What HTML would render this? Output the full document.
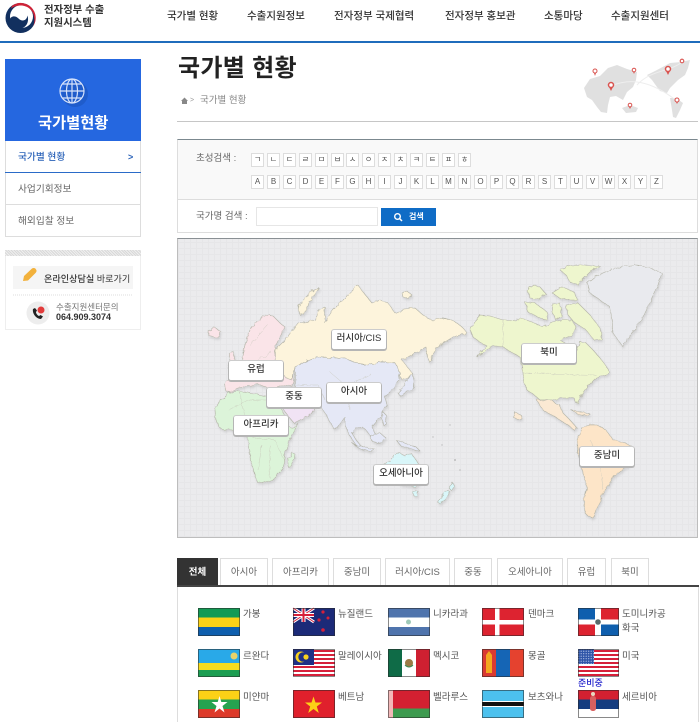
<!DOCTYPE html>
<html lang="ko"><head><meta charset="utf-8"><title>국가별 현황</title>
<style>
*{box-sizing:border-box}
html,body{margin:0;padding:0;background:#fff}
body{width:700px;height:722px;overflow:hidden;position:relative;font-family:"Liberation Sans","Noto Sans CJK KR",sans-serif;color:#444;filter:blur(.3px)}
.t{position:absolute;white-space:nowrap;line-height:1;font-size:10px}
.b{position:absolute}
.nav{font-size:10.5px;color:#333;top:11px;font-weight:500}
.ck{position:absolute;width:13px;height:14px;border:1px solid #ddd;background:#fff;font-size:8px;line-height:12px;text-align:center;color:#555}
.lb{position:absolute;width:54px;height:19px;background:#fff;border-radius:2px;box-shadow:0 1px 0 1px #b5b5b5,0 0 0 1px #ccc;text-align:center;font-size:9.5px;line-height:18px;color:#333;font-weight:500}
.tab{position:absolute;top:558px;height:27px;border:1px solid #ddd;border-bottom:0;background:#fff;text-align:center;font-size:9.5px;line-height:27px;color:#666}
.c{position:absolute;font-size:9.5px;color:#555;line-height:14px}
.f{position:absolute;width:42px;height:28px;border:1px solid rgba(40,40,40,.55)}
svg{position:absolute;left:0;top:0}
</style></head><body>

<!-- header -->
<div class="b" style="left:0;top:41px;width:700px;height:2px;background:#1f6cbc"></div>
<svg width="40" height="40" viewBox="0 0 40 40">
<circle cx="20.500" cy="18" r="15" fill="#12305f"/>
<circle cx="21.500" cy="16.500" r="11.500" fill="#fff"/>
<path d="M12 5.700A15 15 0 0 1 33 26.500A13.500 13.500 0 0 0 34 17C33.500 10 27 5.500 21 5.500C17 5.500 14 6.500 11 8.500Z" fill="#cf2337"/>
<path d="M9.500 20C11 15.500 15.500 15.500 18.500 18.500C21.500 21.500 26.500 21.500 27.500 15.500C29.500 22 26 28.500 19.500 28.500C14 28.500 10.500 25 9.500 20Z" fill="#12305f"/>
</svg>
<div class="t" style="left:44px;top:4px;font-size:10.400px;color:#333;font-weight:700;line-height:13px">전자정부 수출<br>지원시스템</div>
<div class="t nav" style="left:167px">국가별 현황</div>
<div class="t nav" style="left:247px">수출지원정보</div>
<div class="t nav" style="left:334px">전자정부 국제협력</div>
<div class="t nav" style="left:445px">전자정부 홍보관</div>
<div class="t nav" style="left:544px">소통마당</div>
<div class="t nav" style="left:611px">수출지원센터</div>

<!-- sidebar -->
<div class="b" style="left:5px;top:59px;width:136px;height:82px;background:#2567e0"></div>
<svg width="146" height="145" viewBox="0 0 146 145">
<circle cx="75" cy="94" r="13" fill="#1d55bd" opacity=".6"/>
<g fill="none" stroke="#d6e2fa" stroke-width="1.200"><circle cx="72" cy="91" r="12"/><ellipse cx="72" cy="91" rx="5.500" ry="12"/><path d="M60 91H84M62 84H82M62 98H82M72 79V103"/></g>
</svg>
<div class="t" style="left:38px;top:116px;font-size:15.300px;color:#fff;font-weight:700">국가별현황</div>
<div class="b" style="left:5px;top:141px;width:136px;height:96px;border:1px solid #ddd;border-top:0"></div>
<div class="b" style="left:5px;top:172px;width:136px;height:1px;background:#2a6bc8"></div>
<div class="b" style="left:5px;top:204px;width:136px;height:1px;background:#ddd"></div>
<div class="t" style="left:18px;top:153px;font-size:9.700px;color:#2a62b8;font-weight:500">국가별 현황</div>
<div class="t" style="left:128px;top:153px;font-size:9px;color:#2a62b8;font-weight:700">&gt;</div>
<div class="t" style="left:18px;top:185px;font-size:9.700px;color:#666">사업기회정보</div>
<div class="t" style="left:18px;top:217px;font-size:9.700px;color:#666">해외입찰 정보</div>

<div class="b" style="left:5px;top:250px;width:136px;height:80px;border:1px solid #eee"></div>
<div class="b" style="left:5px;top:250px;width:136px;height:6px;background:repeating-linear-gradient(45deg,#d8d8d8 0 1px,#efefef 1px 2px)"></div>
<div class="b" style="left:13px;top:266px;width:120px;height:23px;background:#f5f5f5"></div>
<svg width="146" height="335" viewBox="0 0 146 335">
<path d="M23 281L24 276L32 268.500C33.500 267.500 35.500 268 36 269.500C37 270.500 36.500 272 35.500 273L28 280.500Z" fill="#f2b13c"/>
<path d="M13 295H133" stroke="#ddd" stroke-dasharray="1 1"/>
<circle cx="38" cy="313" r="11.500" fill="#ededed"/>
<path d="M33 309C32 313 36 319 41 319L43 316.500L40.500 315L39 316C37.500 315.500 36 313.500 36 312L37 310.500L35 308Z" fill="#222"/>
<circle cx="41" cy="310" r="3.500" fill="#e23b3b"/>
</svg>
<div class="t" style="left:44px;top:275px;font-size:9.100px;color:#333;font-weight:500">온라인상담실 <span style="font-weight:400">바로가기</span></div>
<div class="t" style="left:56px;top:303px;font-size:8.500px;color:#777">수출지원센터문의</div>
<div class="t" style="left:56px;top:313px;font-size:9px;color:#333;font-weight:700">064.909.3074</div>

<!-- title -->
<div class="t" style="left:178px;top:57px;font-size:24px;font-weight:700;color:#222;letter-spacing:.3px">국가별 현황</div>
<svg width="12" height="10" viewBox="0 0 12 10" style="left:180px;top:96px"><path d="M1 5L4.500 1.500L8 5H7V8H2V5Z" fill="#888"/></svg>
<div class="t" style="left:190px;top:97px;font-size:7px;color:#999">&gt;</div>
<div class="t" style="left:200px;top:96px;font-size:9.500px;color:#888">국가별 현황</div>
<div class="b" style="left:177px;top:121px;width:521px;height:1px;background:#c6c6c6"></div>

<svg width="700" height="125" viewBox="0 0 700 125">
<g fill="#e0e0e0">
<path d="M584 88L590 79L600 76L608 68L617 65L627 69L637 72L636 80L633 87L627 92L623 100L616 96L610 97L608 105L607 113L601 112L597 107L592 100L587 97Z"/>
<path d="M622 108L630 105L638 108L636 112L626 113Z"/>
<path d="M647 75L657 70L670 63L681 62L690 60L688 68L685 75L678 80L675 83L670 88L667 93L660 91L657 87L652 80Z"/>
<path d="M670 98L676 98L683 103L680 110L676 118L673 117L672 110Z"/>
</g>
<g fill="none" stroke="#eee"><path d="M637 85C650 70 670 72 682 62M611 86C630 78 650 80 677 101"/></g>
<g fill="#fff" stroke="#d9534f">
<circle cx="595" cy="71" r="2" stroke-width="1"/><circle cx="634" cy="70" r="1.800" stroke-width="1"/><circle cx="668" cy="69" r="2.500" stroke-width="1.500"/><circle cx="682" cy="61" r="1.800" stroke-width="1.100"/><circle cx="611" cy="85" r="2.500" stroke-width="1.500"/><circle cx="630" cy="105" r="1.800" stroke-width="1"/><circle cx="677" cy="100" r="2" stroke-width="1.100"/>
</g>
<g fill="#d9534f"><path d="M594 73L596 73L595 76ZM633 71.500L635 71.500L634 74ZM666 71L670 71L668 75ZM609 87L613 87L611 91ZM629 107L631 107L630 109ZM676 102L678 102L677 104Z"/></g>
</svg>

<!-- search box -->
<div class="b" style="left:177px;top:139px;width:521px;height:94px;background:#fff;border:1px solid #ddd;border-top:1px solid #7b888f"></div>
<div class="b" style="left:178px;top:140px;width:519px;height:60px;background:#f9f9f9;border-bottom:1px solid #ddd"></div>
<div class="t" style="left:196px;top:154px;font-size:9.500px;color:#666">초성검색 :</div>
<div class="ck" style="left:251px;top:153px">ㄱ</div><div class="ck" style="left:267px;top:153px">ㄴ</div><div class="ck" style="left:283px;top:153px">ㄷ</div><div class="ck" style="left:299px;top:153px">ㄹ</div><div class="ck" style="left:315px;top:153px">ㅁ</div><div class="ck" style="left:331px;top:153px">ㅂ</div><div class="ck" style="left:346px;top:153px">ㅅ</div><div class="ck" style="left:362px;top:153px">ㅇ</div><div class="ck" style="left:378px;top:153px">ㅈ</div><div class="ck" style="left:394px;top:153px">ㅊ</div><div class="ck" style="left:410px;top:153px">ㅋ</div><div class="ck" style="left:426px;top:153px">ㅌ</div><div class="ck" style="left:442px;top:153px">ㅍ</div><div class="ck" style="left:458px;top:153px">ㅎ</div>
<div class="ck" style="left:251px;top:175px">A</div><div class="ck" style="left:267px;top:175px">B</div><div class="ck" style="left:283px;top:175px">C</div><div class="ck" style="left:299px;top:175px">D</div><div class="ck" style="left:315px;top:175px">E</div><div class="ck" style="left:331px;top:175px">F</div><div class="ck" style="left:346px;top:175px">G</div><div class="ck" style="left:362px;top:175px">H</div><div class="ck" style="left:378px;top:175px">I</div><div class="ck" style="left:394px;top:175px">J</div><div class="ck" style="left:410px;top:175px">K</div><div class="ck" style="left:426px;top:175px">L</div><div class="ck" style="left:442px;top:175px">M</div><div class="ck" style="left:458px;top:175px">N</div><div class="ck" style="left:474px;top:175px">O</div><div class="ck" style="left:490px;top:175px">P</div><div class="ck" style="left:506px;top:175px">Q</div><div class="ck" style="left:522px;top:175px">R</div><div class="ck" style="left:538px;top:175px">S</div><div class="ck" style="left:554px;top:175px">T</div><div class="ck" style="left:570px;top:175px">U</div><div class="ck" style="left:586px;top:175px">V</div><div class="ck" style="left:602px;top:175px">W</div><div class="ck" style="left:618px;top:175px">X</div><div class="ck" style="left:634px;top:175px">Y</div><div class="ck" style="left:650px;top:175px">Z</div>
<div class="t" style="left:196px;top:212px;font-size:9.500px;color:#666">국가명 검색 :</div>
<div class="b" style="left:256px;top:207px;width:122px;height:19px;border:1px solid #e6e6e6;background:#fff"></div>
<div class="b" style="left:381px;top:208px;width:55px;height:18px;background:#0f6cc6"></div>
<svg width="12" height="12" viewBox="0 0 12 12" style="left:392px;top:211px"><circle cx="5.500" cy="5.500" r="2.800" fill="none" stroke="#fff" stroke-width="1.400"/><path d="M7.500 7.500L10 10" stroke="#fff" stroke-width="1.500"/></svg>
<div class="t" style="left:409px;top:213px;font-size:8px;color:#fff;font-weight:700">검색</div>

<!-- map -->
<div class="b" style="left:177px;top:238px;width:521px;height:300px;border:1px solid #bdbdbd;border-top:1px solid #8a9094;background-color:#ebebed;background-image:repeating-linear-gradient(0deg,#e6e6e8 0 1px,transparent 1px 6px),repeating-linear-gradient(90deg,#e6e6e8 0 1px,transparent 1px 6px)"></div>
<svg width="700" height="540" viewBox="0 0 700 540">
<defs>
<filter id="j" x="170" y="235" width="530" height="305" filterUnits="userSpaceOnUse">
<feTurbulence type="fractalNoise" baseFrequency=".22" numOctaves="2" seed="4" result="n"/>
<feDisplacementMap in="SourceGraphic" in2="n" scale="3.500" result="d"/>
<feDropShadow in="d" dx="1" dy="2" stdDeviation="1" flood-color="#000" flood-opacity=".1"/>
</filter>
</defs>
<g stroke="#b4b4a8" stroke-width=".6" stroke-linejoin="round" filter="url(#j)">
<!-- Europe -->
<path fill="#fae4e8" d="M242 357L245 345L250 330L258 320L265 315L273 316L280 323L285 327L281 335L276 345L275 352L283 360L292 370L294 382L292 386L284 385L276 388L268 388L258 384L248 386L238 388L230 392L226 391L224 384L228 378L238 374L246 370L244 364Z"/>
<path fill="#fae4e8" d="M229 352L233 351L234 358L238 365L235 368L228 368L230 361Z"/>
<path fill="#fae4e8" d="M208 331L214 327L221 332L220 337L214 337L209 336Z"/>
<!-- Russia -->
<path fill="#fdf4dc" d="M275 350L285 340L298 323L308 322L315 320L318 310L325 307L325 323L328 317L333 310L345 298L352 290L358 285L363 292L372 303L380 300L388 303L395 313L404 309L415 308L424 316L432 320L443 318L450 319L457 323L463 328L467 333L460 335L453 337L445 342L437 347L433 353L430 363L427 355L426 347L420 350L408 357L402 360L412 373L408 378L402 380L397 371L395 363L382 362L368 365L356 363L345 358L330 358L318 357L305 362L295 367L292 380L286 378L282 373L280 366L275 360Z"/>
<path fill="#fdf4dc" d="M300 315L298 306L305 298L312 291L319 288L314 296L309 303L306 312Z"/>
<path fill="#fdf4dc" d="M402 293L407 291L412 295L408 298L403 297Z"/>
<!-- Asia -->
<path fill="#e5e8f6" d="M295 367L305 362L318 357L330 358L345 358L356 363L368 365L382 362L395 363L400 373L398 380L395 387L390 392L385 397L387 405L382 413L378 420L372 427L376 435L372 438L366 430L362 427L356 428L352 433L356 440L362 447L370 449L363 450L356 445L350 436L345 425L345 417L340 424L335 430L330 422L325 413L318 403L312 406L304 402L296 396L295 387Z"/>
<path fill="#e5e8f6" d="M404 386L412 373L414 380L413 388L407 392L400 396L398 393Z"/>
<path fill="#e5e8f6" d="M383 412L386 415L386 424L384 426L382 418Z"/>
<path fill="#e5e8f6" d="M371 436L380 433L386 438L378 444L372 441Z"/>
<path fill="#e5e8f6" d="M352 443L360 449L370 451L375 449L366 448L358 446Z"/>
<path fill="#e5e8f6" d="M396 440L405 443L416 447L420 451L412 449L402 447Z"/>
<!-- Arabia -->
<path fill="#f1e3f4" d="M282 407L292 404L308 407L315 409L310 415L298 421L294 423L288 416Z"/>
<!-- Africa -->
<path fill="#dcf4d9" d="M215 410L219 402L228 393L238 391L245 392L256 394L268 397L276 399L282 410L286 420L288 427L294 428L298 423L293 434L288 443L287 448L285 453L284 462L282 470L272 480L262 483L257 482L254 472L250 457L249 447L247 437L240 433L232 430L224 430L220 428L216 420Z"/>
<path fill="#dcf4d9" d="M288 467L288 459L292 453L295 454L294 461L291 466Z"/>
<!-- Oceania -->
<path fill="#d9f6f9" d="M382 465L390 461L394 455L400 453L405 456L411 453L416 460L421 468L423 474L420 481L416 487L410 486L402 485L396 480L388 481L382 478Z"/>
<path fill="#d9f6f9" d="M413 492L418 491L417 496L414 496Z"/>
<path fill="#d9f6f9" d="M440 498L447 490L450 492L446 499L441 504L438 503Z"/>
<path fill="#d9f6f9" d="M449 488L452 482L455 487L452 491Z"/>
<!-- North America -->
<path fill="#eef6ce" d="M470 330L474 322L480 315L490 316L503 320L512 321L520 318L532 322L543 327L552 322L563 320L572 320L576 327L573 335L565 338L560 340L568 345L577 350L580 342L586 343L593 350L600 358L607 367L610 373L604 375L597 377L592 382L587 387L582 394L578 402L576 403L574 398L570 398L560 398L552 400L540 400L533 394L527 390L524 382L523 373L522 365L520 357L511 352L503 347L496 346L490 347L484 352L477 357L482 350L487 346L480 342L473 337Z"/>
<path fill="#eef6ce" d="M560 270L570 265L585 265L600 266L590 272L582 280L578 285L570 282L566 275Z"/>
<path fill="#eef6ce" d="M527 290L534 285L540 287L546 294L540 299L530 298Z"/>
<path fill="#eef6ce" d="M525 302L535 303L547 312L548 320L540 318L528 312Z"/>
<path fill="#eef6ce" d="M552 293L562 287L574 292L578 300L570 300L560 298Z"/>
<path fill="#eef6ce" d="M552 304L560 303L562 316L556 320L552 312Z"/>
<path fill="#eef6ce" d="M566 305L578 303L590 315L600 328L602 340L594 340L586 330L574 322L568 315Z"/>
<!-- Greenland -->
<path fill="#e9eaee" d="M587 283L596 276L610 270L625 266L637 265L650 268L662 273L658 285L653 295L650 303L644 315L637 327L630 335L623 347L618 340L613 333L612 320L610 307L600 300L590 293Z"/>
<!-- Central / South America -->
<path fill="#fbe9d3" d="M536 399L540 400L552 400L556 404L560 405L563 413L570 420L577 428L574 430L568 425L563 422L555 417L548 413L543 410L539 404Z"/>
<path fill="#fbe9d3" d="M571 410L580 412L590 414L588 416L578 414Z"/>
<path fill="#fbe9d3" d="M515 412L521 415L522 419L518 420L513 417Z"/>
<path fill="#fde5c8" d="M577 443L579 435L583 427L590 425L597 425L606 430L613 440L622 442L633 447L631 457L627 467L620 472L613 477L609 485L603 493L600 503L596 510L593 518L588 516L585 513L584 500L587 487L582 470L578 453Z"/>
<!-- internal borders -->
<g fill="none" stroke="#c6c6ba" stroke-width=".4">
<path d="M503 320V347M523 373L596 375M228 410L250 400L268 400M240 392L245 420M250 437L275 440L284 460M262 445L258 470M270 445L270 478"/>
<path d="M330 372L345 385L372 375M345 385L350 410M296 385L318 385L325 400M590 440L600 460L603 490M583 455L610 450"/>
<path d="M250 345L268 325M258 360L272 352"/>
</g>
</g>
<g fill="#bcbcbc"><circle cx="433" cy="437" r=".7"/><circle cx="450" cy="425" r=".7"/><circle cx="442" cy="445" r=".7"/><circle cx="455" cy="460" r="1"/><circle cx="460" cy="470" r=".8"/></g>
</svg>
<div class="lb" style="left:332px;top:330px">러시아/CIS</div>
<div class="lb" style="left:229px;top:361px">유럽</div>
<div class="lb" style="left:267px;top:388px">중동</div>
<div class="lb" style="left:327px;top:383px">아시아</div>
<div class="lb" style="left:234px;top:416px">아프리카</div>
<div class="lb" style="left:374px;top:465px">오세아니아</div>
<div class="lb" style="left:522px;top:344px">북미</div>
<div class="lb" style="left:580px;top:447px">중남미</div>

<!-- tabs -->
<div class="b" style="left:177px;top:585px;width:522px;height:2px;background:#444"></div>
<div class="b" style="left:177px;top:587px;width:1px;height:135px;background:#ddd"></div>
<div class="b" style="left:698px;top:587px;width:1px;height:135px;background:#ddd"></div>
<div class="tab" style="left:177px;width:41px;background:#333;border-color:#333;color:#fff;font-weight:700">전체</div>
<div class="tab" style="left:220px;width:48px">아시아</div>
<div class="tab" style="left:272px;width:57px">아프리카</div>
<div class="tab" style="left:333px;width:48px">중남미</div>
<div class="tab" style="left:385px;width:65px">러시아/CIS</div>
<div class="tab" style="left:454px;width:38px">중동</div>
<div class="tab" style="left:497px;width:66px">오세아니아</div>
<div class="tab" style="left:567px;width:39px">유럽</div>
<div class="tab" style="left:611px;width:38px">북미</div>

<!-- flags -->
<svg width="700" height="722" viewBox="0 0 700 722">
<defs><pattern id="st" width="2.500" height="2.500" patternUnits="userSpaceOnUse"><rect width="2.500" height="2.500" fill="#2f55a8"/><circle cx="1.200" cy="1.200" r=".6" fill="#b9c8ea"/></pattern></defs>
<!-- Gabon -->
<rect x="198" y="608" width="42" height="9.500" fill="#139a55"/><rect x="198" y="617.500" width="42" height="9.500" fill="#fcd116"/><rect x="198" y="627" width="42" height="9" fill="#0f5fae"/>
<!-- NZ -->
<rect x="293" y="608" width="42" height="28" fill="#1c2a78"/>
<path d="M293 608L314 622M314 608L293 622" stroke="#fff" stroke-width="3"/><path d="M293 608L314 622M314 608L293 622" stroke="#d6203a" stroke-width="1"/>
<path d="M303.500 608V622M293 615H314" stroke="#fff" stroke-width="4"/><path d="M303.500 608V622M293 615H314" stroke="#d6203a" stroke-width="2"/>
<g fill="#d6203a"><circle cx="323" cy="612" r="1.600"/><circle cx="319" cy="620" r="1.600"/><circle cx="328" cy="618" r="1.500"/><circle cx="323" cy="630" r="1.800"/></g>
<!-- Nicaragua -->
<rect x="388" y="608" width="42" height="28" fill="#4f74ad"/><rect x="388" y="617.500" width="42" height="9.500" fill="#fff"/><circle cx="408.500" cy="622" r="2.500" fill="#9fc9b8"/>
<!-- Denmark -->
<rect x="482" y="608" width="42" height="28" fill="#dd2330"/><rect x="495" y="608" width="4.500" height="28" fill="#fff"/><rect x="482" y="620" width="42" height="4.500" fill="#fff"/>
<!-- Dominican -->
<rect x="578" y="608" width="41" height="28" fill="#fff"/><rect x="578" y="608" width="17" height="11.500" fill="#0f5fae"/><rect x="601" y="608" width="18" height="11.500" fill="#dd2330"/><rect x="578" y="624.500" width="17" height="11.500" fill="#dd2330"/><rect x="601" y="624.500" width="18" height="11.500" fill="#0f5fae"/><circle cx="598" cy="622" r="2.800" fill="#5a6a6a"/>
<!-- Rwanda -->
<rect x="198" y="649" width="42" height="14" fill="#29a9e8"/><rect x="198" y="663" width="42" height="7" fill="#f7dc1f"/><rect x="198" y="670" width="42" height="7" fill="#1c9e52"/><circle cx="234" cy="656" r="3.500" fill="#e8d36a"/>
<!-- Malaysia -->
<rect x="293" y="649" width="42" height="28" fill="#fff"/>
<path d="M293 651H335M293 655H335M293 659H335M293 663H335M293 667H335M293 671H335M293 675H335" stroke="#d6203a" stroke-width="2"/>
<rect x="293" y="649" width="21" height="16" fill="#1f2f86"/>
<circle cx="301" cy="657" r="5.500" fill="#f7d21f"/><circle cx="303" cy="657" r="4.700" fill="#1f2f86"/><circle cx="306" cy="657" r="2.600" fill="#f7d21f"/>
<!-- Mexico -->
<rect x="388" y="649" width="14" height="28" fill="#0f6b47"/><rect x="402" y="649" width="14" height="28" fill="#fff"/><rect x="416" y="649" width="14" height="28" fill="#ce2031"/><circle cx="409" cy="663" r="4" fill="#9c7a45"/><path d="M405 665Q409 669 413 665" stroke="#3e8a55" fill="none"/>
<!-- Mongolia -->
<rect x="482" y="649" width="42" height="28" fill="#1565b5"/><rect x="482" y="649" width="14" height="28" fill="#da3a32"/><rect x="510" y="649" width="14" height="28" fill="#e5422f"/><path d="M486 655L489 651L492 655V673H486Z" fill="#f4a81f"/>
<!-- USA -->
<rect x="578" y="649" width="41" height="28" fill="#fff"/>
<path d="M578 651H619M578 655H619M578 659H619M578 663H619M578 667H619M578 671H619M578 675H619" stroke="#d6203a" stroke-width="2"/>
<rect x="578" y="649" width="16" height="15" fill="url(#st)"/>
<!-- Myanmar -->
<rect x="198" y="690" width="42" height="9.500" fill="#fcd116"/><rect x="198" y="699.500" width="42" height="9.500" fill="#25a350"/><rect x="198" y="709" width="42" height="9" fill="#dd3a2a"/><path d="M219.500 696L221.300 702L227.500 702L222.500 706L224.500 712.500L219.500 708.500L214.500 712.500L216.500 706L211.500 702L217.700 702Z" fill="#fff"/>
<!-- Vietnam -->
<rect x="293" y="690" width="42" height="28" fill="#e0202c"/><path d="M313.500 696.500L315.500 702.500L322 702.500L316.800 706.500L318.800 713L313.500 709L308.200 713L310.200 706.500L305 702.500L311.500 702.500Z" fill="#fcd116"/>
<!-- Belarus -->
<rect x="388" y="690" width="42" height="18.500" fill="#d32031"/><rect x="388" y="708.500" width="42" height="9.500" fill="#3d9b4f"/><rect x="388" y="690" width="5" height="28" fill="#f3b8b8"/>
<!-- Botswana -->
<rect x="482" y="690" width="42" height="28" fill="#4cc1ee"/><rect x="482" y="701" width="42" height="6" fill="#fff"/><rect x="482" y="702" width="42" height="4" fill="#111"/>
<!-- Serbia -->
<rect x="578" y="690" width="41" height="9.500" fill="#d32031"/><rect x="578" y="699.500" width="41" height="9.500" fill="#153d80"/><rect x="578" y="709" width="41" height="9" fill="#fff"/><rect x="590" y="696" width="6" height="15" rx="2.500" fill="#d8605f"/><circle cx="593" cy="694" r="2" fill="#e8d9c0"/>
</svg>
<div class="f" style="left:198px;top:608px"></div><div class="f" style="left:293px;top:608px"></div><div class="f" style="left:388px;top:608px"></div><div class="f" style="left:482px;top:608px"></div><div class="f" style="left:578px;top:608px;width:41px"></div>
<div class="f" style="left:198px;top:649px"></div><div class="f" style="left:293px;top:649px"></div><div class="f" style="left:388px;top:649px"></div><div class="f" style="left:482px;top:649px"></div><div class="f" style="left:578px;top:649px;width:41px"></div>
<div class="f" style="left:198px;top:690px"></div><div class="f" style="left:293px;top:690px"></div><div class="f" style="left:388px;top:690px"></div><div class="f" style="left:482px;top:690px"></div><div class="f" style="left:578px;top:690px;width:41px"></div>

<div class="c" style="left:243px;top:608px">가봉</div>
<div class="c" style="left:338px;top:608px">뉴질랜드</div>
<div class="c" style="left:433px;top:608px">니카라과</div>
<div class="c" style="left:528px;top:608px">덴마크</div>
<div class="c" style="left:622px;top:608px">도미니카공<br>화국</div>
<div class="c" style="left:243px;top:650px">르완다</div>
<div class="c" style="left:338px;top:650px">말레이시아</div>
<div class="c" style="left:433px;top:650px">멕시코</div>
<div class="c" style="left:528px;top:650px">몽골</div>
<div class="c" style="left:622px;top:650px">미국</div>
<div class="c" style="left:243px;top:691px">미얀마</div>
<div class="c" style="left:338px;top:691px">베트남</div>
<div class="c" style="left:433px;top:691px">벨라루스</div>
<div class="c" style="left:528px;top:691px">보츠와나</div>
<div class="c" style="left:622px;top:691px">세르비아</div>
<div class="t" style="left:578px;top:679px;font-size:9px;color:#2222cc;font-weight:500">준비중</div>
</body></html>
